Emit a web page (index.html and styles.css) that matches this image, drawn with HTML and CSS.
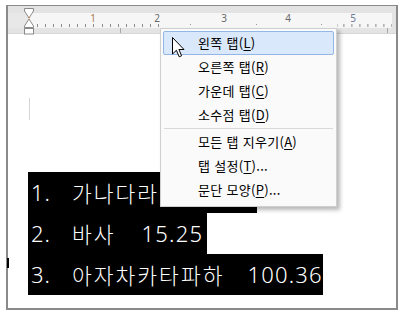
FILE: index.html
```html
<!DOCTYPE html>
<html lang="ko">
<head>
<meta charset="utf-8">
<link rel="stylesheet" href="styles.css">
</head>
<body>
<div class="frame">
  <div class="ruler">
    <div class="r-top"></div>
    <div class="r-mid">
      <div class="r-margin"></div>
      <div class="r-body">
        <div class="ticks ticks-a"></div>
        <div class="ticks-gap"></div>
        <div class="ticks ticks-b"></div>
      </div>
      <div class="r-end"></div>
    </div>
    <div class="r-bot"></div>
    <span class="num n1">1</span>
    <span class="num n2">2</span>
    <span class="num n3">3</span>
    <span class="num n4">4</span>
    <span class="num n5">5</span>
    <span class="dot d1"></span>
    <span class="dot d2"></span>
    <span class="dot d3"></span>
    <span class="mark m1"></span>
    <span class="mark m2"></span>
    <svg class="indent" width="12" height="27" viewBox="0 0 12 27">
      <path d="M1.5 0.5 H10.5 V3 L6 10 L1.5 3 Z" fill="#fff" stroke="#8a8a8a"/>
      <path d="M6 11 L10.5 18 V19.5 H1.5 V18 Z" fill="#fff" stroke="#8a8a8a"/>
      <rect x="1.5" y="20.5" width="9" height="5.5" fill="#fff" stroke="#8a8a8a"/>
      <path d="M5 9 L7 9 L6 11 Z" fill="#d0793a"/>
    </svg>
  </div>
  <div class="doc">
    <div class="corner"></div>
    <div class="lines">
      <div class="line l1"><span class="no">1.</span><span class="txt">가나다라</span></div>
      <div class="line l2"><span class="no">2.</span><span class="txt">바사</span><span class="val">15.25</span></div>
      <div class="line l3"><span class="no">3.</span><span class="txt">아자차카타파하</span><span class="val">100.36</span></div>
      <span class="caret"></span>
    </div>
  </div>
</div>

<div class="menu">
  <div class="item active">왼쪽 탭(<u>L</u>)</div>
  <div class="item">오른쪽 탭(<u>R</u>)</div>
  <div class="item">가운데 탭(<u>C</u>)</div>
  <div class="item">소수점 탭(<u>D</u>)</div>
  <div class="sep"></div>
  <div class="item">모든 탭 지우기(<u>A</u>)</div>
  <div class="item">탭 설정(<u>T</u>)...</div>
  <div class="item">문단 모양(<u>P</u>)...</div>
</div>

<svg class="cursor" width="13" height="21" viewBox="0 0 13 21">
  <path d="M0.5 0.5 V17 L4.4 13.3 L7.2 19.8 L9.6 18.8 L6.9 12.5 H12 Z" fill="#fff" stroke="#000" stroke-width="1" stroke-linejoin="miter"/>
</svg>
</body>
</html>
```

FILE: styles.css
```css
* { box-sizing: border-box; }
html, body {
  margin: 0;
  padding: 0;
  background: #fff;
}
body {
  width: 405px;
  height: 316px;
  position: relative;
  overflow: hidden;
  font-family: "Noto Sans CJK KR", "Noto Sans", sans-serif;
}
.frame {
  margin: 5px 0 0 6px;
  width: 392px;
  height: 305px;
  border: 2px solid #8a8a8a;
  border-top-width: 1px;
  position: relative;
}
.ruler {
  position: relative;
  height: 28px;
  display: flex;
  flex-direction: column;
}
.r-top {
  height: 7px;
  background: #e3e3e3;
}
.r-mid {
  height: 15px;
  display: flex;
  background: #e6e6e6;
}
.r-margin {
  width: 20px;
  background: #e8e8e8;
}
.r-body {
  width: 364px;
  background: #f6f6f6;
  display: flex;
  align-items: flex-end;
  padding-bottom: 1px;
}
.r-end {
  flex: 1;
  background: #e3e3e3;
}
.ticks {
  height: 3px;
  background-image: repeating-linear-gradient(to right, transparent 0 1px, #8c8c8c 1px 2px, transparent 2px 8.0625px);
}
.ticks-a {
  width: 132px;
  background-position: 0 0;
}
.ticks-gap {
  width: 177px;
}
.ticks-b {
  width: 55px;
  background-position: 5.4px 0;
}
.r-bot {
  height: 6px;
  background: #e4e4e4;
  border-bottom: 1px solid #d6d6d6;
}
.num {
  position: absolute;
  top: 6px;
  width: 10px;
  margin-left: -5px;
  text-align: center;
  font-family: "Noto Sans", sans-serif;
  font-size: 10px;
  line-height: 12px;
  color: #6a6a6a;
}
.n1 { left: 85px; color: #b07a48; }
.n2 { left: 149px; }
.n3 { left: 216px; }
.n4 { left: 280px; }
.n5 { left: 345px; color: #6b7a9a; }
.dot {
  position: absolute;
  top: 18px;
  width: 1px;
  height: 1px;
  background: #9a9a9a;
}
.d1 { left: 182px; }
.d2 { left: 248px; }
.d3 { left: 313px; }
.mark {
  position: absolute;
  top: 22px;
  width: 1px;
  height: 5px;
  background: #a8a8a8;
}
.m1 { left: 112px; }
.m2 { left: 379px; }
.indent {
  position: absolute;
  left: 15px;
  top: 2px;
}
.doc {
  position: relative;
}
.corner {
  margin: 64px 0 0 21px;
  width: 1px;
  height: 22px;
  background: #d4d4d4;
}
.lines {
  position: relative;
  margin-top: 52px;
  padding-left: 20px;
  display: flex;
  flex-direction: column;
  align-items: flex-start;
}
.line {
  display: flex;
  align-items: center;
  height: 41px;
  background: #000;
  color: #fff;
  font-size: 22px;
  font-weight: 300;
  line-height: 41px;
  padding-left: 3px;
}
.no {
  width: 41px;
  font-family: "Noto Sans", sans-serif;
  letter-spacing: 1px;
}
.txt {
  font-family: "Noto Sans CJK KR", sans-serif;
  font-size: 21.5px;
  font-weight: 300;
  letter-spacing: 2px;
}
.val {
  font-family: "Noto Sans", sans-serif;
  letter-spacing: 1.2px;
}
.l1 { width: 229px; }
.l2 { width: 179px; }
.l3 { width: 295px; }
.l2 .val { margin-left: 26px; }
.l3 .val { margin-left: 23px; }
.caret {
  position: absolute;
  left: -1px;
  top: 86px;
  width: 2px;
  height: 10px;
  background: #000;
}
.menu {
  position: absolute;
  left: 160px;
  top: 28px;
  width: 177px;
  background: #fafafa;
  border: 1px solid #cfcfcf;
  padding: 2px 2px 4px 2px;
  box-shadow: 3px 3px 4px rgba(0, 0, 0, 0.28);
  font-size: 13px;
  letter-spacing: 0.3px;
  color: #000;
}
.item {
  height: 24px;
  line-height: 22px;
  padding-left: 34px;
  border: 1px solid transparent;
  white-space: nowrap;
}
.item u {
  text-underline-offset: 2px;
}
.item.active {
  background: #d9e8fb;
  border-color: #94b6e6;
  border-radius: 2px;
}
.sep {
  height: 1px;
  margin: 1px 1px 1px 1px;
  background: #d9d9d9;
}
.cursor {
  position: absolute;
  left: 172px;
  top: 37px;
}
```
